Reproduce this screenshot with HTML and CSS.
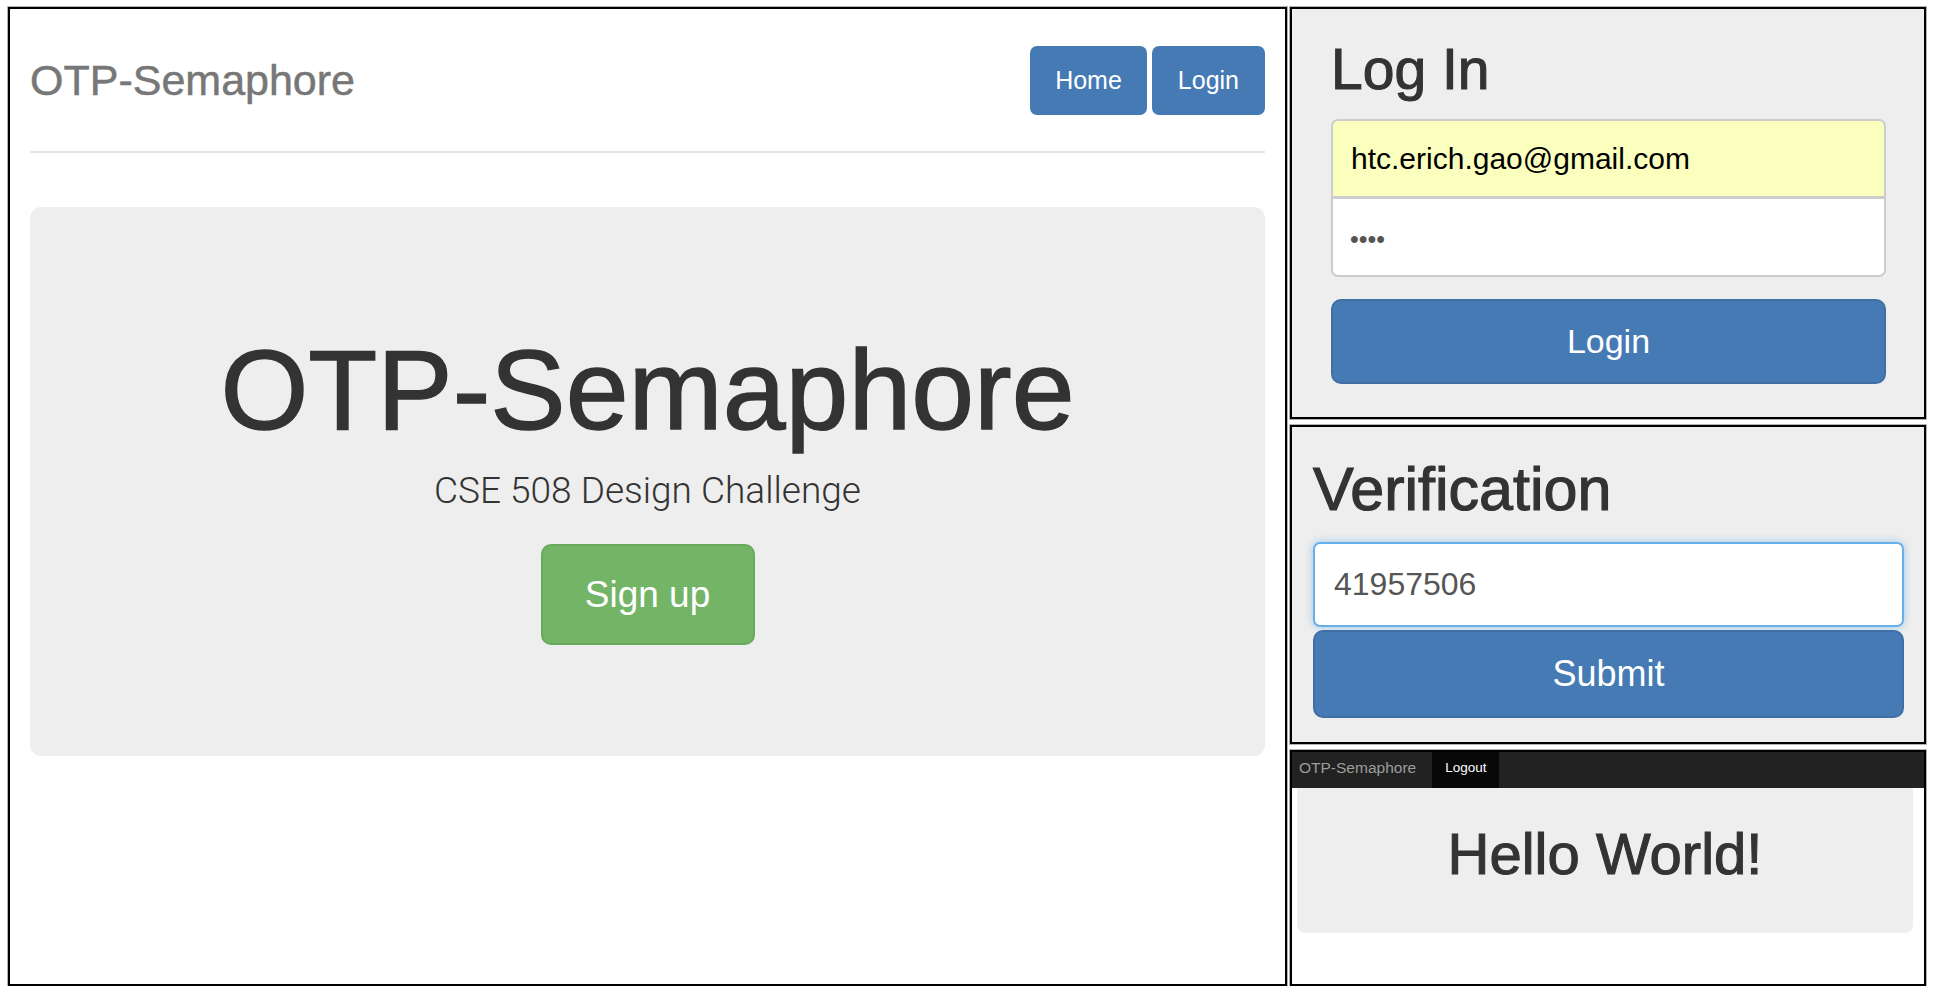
FILE: index.html
```html
<!DOCTYPE html>
<html lang="en">
<head>
<meta charset="utf-8">
<title>OTP-Semaphore</title>
<link rel="stylesheet" href="styles.css">
</head>
<body>
<div class="layout">
  <section class="panel home">
    <header class="site-header">
      <h3 class="brand">OTP-Semaphore</h3>
      <nav class="pills">
        <a class="pill">Home</a>
        <a class="pill">Login</a>
      </nav>
    </header>
    <div class="jumbotron">
      <h1 class="hero-title">OTP-Semaphore</h1>
      <p class="lead">CSE 508 Design Challenge</p>
      <a class="btn-success">Sign up</a>
    </div>
  </section>

  <div class="side">
    <section class="panel login">
      <h2 class="panel-title">Log In</h2>
      <div class="field field-email">htc.erich.gao@gmail.com</div>
      <div class="field field-password">••••</div>
      <a class="btn-primary btn-login">Login</a>
    </section>

    <section class="panel verify">
      <h2 class="panel-title verify-title">Verification</h2>
      <div class="field field-code">41957506</div>
      <a class="btn-primary btn-submit">Submit</a>
    </section>

    <section class="panel hello">
      <nav class="navbar">
        <span class="navbar-brand">OTP-Semaphore</span>
        <a class="navbar-link">Logout</a>
      </nav>
      <div class="mini-jumbo">
        <h1 class="hello-title">Hello World!</h1>
      </div>
    </section>
  </div>
</div>
</body>
</html>
```

FILE: styles.css
```css
* {
  box-sizing: border-box;
}

html, body {
  margin: 0;
  padding: 0;
  background: #fff;
}

body {
  font-family: "Liberation Sans", Arial, Helvetica, sans-serif;
  color: #333;
}

.layout {
  display: flex;
  gap: 3px;
  padding: 7px 0 0 8px;
}

.panel {
  border: 2px solid #000;
  box-shadow: 0 0 0 1px rgba(0, 0, 0, 0.3);
}

/* ---------- left panel ---------- */
.home {
  width: 1279px;
  height: 979px;
  padding: 0 20px;
  background: #fff;
}

.site-header {
  display: flex;
  align-items: center;
  justify-content: space-between;
  padding: 37px 0 36px;
  border-bottom: 2px solid #e5e5e5;
}

.brand {
  margin: 0;
  font-size: 43px;
  font-weight: normal;
  color: #777;
  -webkit-text-stroke: 0.5px #777;
  line-height: 1.1;
}

.pills {
  display: flex;
  gap: 5px;
}

.pill {
  display: flex;
  align-items: center;
  justify-content: center;
  height: 69px;
  padding: 0 25px;
  background: #467ab4;
  color: #fff;
  font-size: 25px;
  border-radius: 7px;
}

.pill + .pill {
  padding: 0 26px;
}

.jumbotron {
  margin-top: 54px;
  height: 549px;
  padding-top: 121px;
  background: #eee;
  border-radius: 11px;
  text-align: center;
}

.hero-title {
  margin: 0;
  font-size: 113px;
  line-height: 124px;
  font-weight: normal;
  color: #333;
  -webkit-text-stroke: 1.4px #333;
}

.lead {
  margin: 14px 0 0;
  font-family: Roboto, "Liberation Sans", sans-serif;
  font-weight: 300;
  font-size: 37px;
  line-height: 50px;
  color: #333;
}

.btn-success {
  display: inline-flex;
  align-items: center;
  justify-content: center;
  margin-top: 28px;
  width: 214px;
  height: 101px;
  background: #73b466;
  border: 2px solid #68aa5c;
  border-radius: 10px;
  color: #fff;
  font-size: 37px;
}

/* ---------- right column ---------- */
.side {
  width: 636px;
  display: flex;
  flex-direction: column;
  gap: 6px;
}

.login {
  height: 412px;
  background: #eee;
  padding: 29px 38px 0 39px;
}

.panel-title {
  margin: 0;
  font-size: 57px;
  line-height: 63px;
  font-weight: normal;
  color: #333;
  -webkit-text-stroke: 1.1px #333;
}

.field {
  display: flex;
  align-items: center;
  background: #fff;
  border: 2px solid #ccc;
  color: #555;
}

.field-email {
  margin-top: 18px;
  height: 79px;
  padding-left: 18px;
  background: #faffbd;
  color: #000;
  font-size: 30px;
  border-radius: 7px 7px 0 0;
}

.field-password {
  margin-top: -1px;
  height: 80px;
  padding: 5px 0 0 17px;
  font-size: 25px;
  letter-spacing: 0;
  border-radius: 0 0 7px 7px;
}

.btn-primary {
  display: flex;
  align-items: center;
  justify-content: center;
  background: #467ab4;
  border: 2px solid #3f6fa5;
  color: #fff;
  border-radius: 10px;
}

.btn-login {
  margin-top: 22px;
  height: 85px;
  font-size: 34px;
}

.verify {
  height: 319px;
  background: #eee;
  padding: 29px 20px 0 21px;
}

.verify-title {
  font-size: 61px;
  line-height: 67px;
  -webkit-text-stroke: 1.2px #333;
}

.field-code {
  margin-top: 19px;
  height: 85px;
  padding-left: 19px;
  font-size: 32px;
  border-color: #66afe9;
  border-radius: 7px;
  box-shadow: 0 0 8px rgba(102, 175, 233, 0.6);
}

.btn-submit {
  margin-top: 3px;
  height: 88px;
  font-size: 36px;
}

.hello {
  height: 236px;
  background: #fff;
}

.navbar {
  display: flex;
  align-items: stretch;
  height: 36px;
  background: #222;
}

.navbar-brand {
  display: flex;
  align-items: center;
  padding: 0 16px 5px 7px;
  font-size: 15.5px;
  color: #9d9d9d;
}

.navbar-link {
  display: flex;
  align-items: center;
  padding: 0 13px 5px;
  background: #080808;
  color: #fff;
  font-size: 13.5px;
}

.mini-jumbo {
  margin: 0 11px 0 5px;
  height: 145px;
  padding-top: 34px;
  background: #eee;
  border-radius: 0 0 8px 8px;
  text-align: center;
}

.hello-title {
  margin: 0;
  font-size: 58px;
  line-height: 63px;
  font-weight: normal;
  color: #333;
  -webkit-text-stroke: 1.1px #333;
}
```
